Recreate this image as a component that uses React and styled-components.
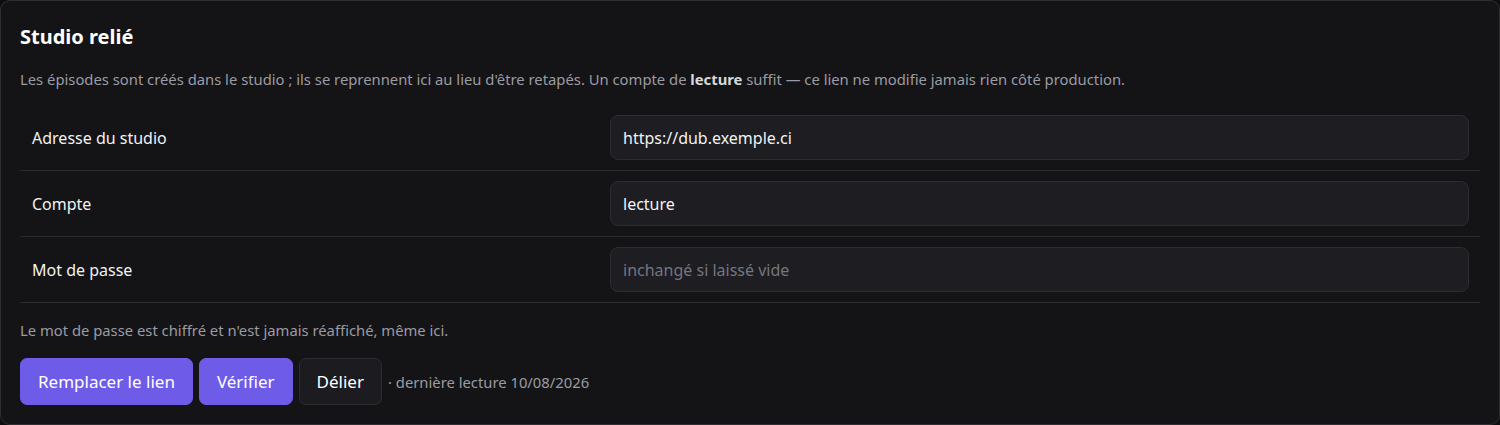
import React from 'react';
import styled, { createGlobalStyle } from 'styled-components';

const GlobalStyle = createGlobalStyle`
  html, body {
    margin: 0;
    padding: 0;
    background: #0e0e10;
  }
  body {
    font-family: "Noto Sans", "Open Sans", sans-serif;
    color: #f2f2f4;
  }
  * { box-sizing: border-box; }
`;

const Card = styled.section`
  width: 1500px;
  height: 425px;
  background: #141416;
  border: 1px solid #2e2e33;
  border-radius: 10px;
  padding: 20px 19px 19px 19px;
  display: flex;
  flex-direction: column;
`;

const Title = styled.h2`
  margin: 0;
  font-size: 20px;
  font-weight: 700;
  line-height: 32px;
  color: #ffffff;
`;

const Lead = styled.p`
  margin: 16px 0 16px;
  font-size: 14.8px;
  line-height: 20px;
  color: #9b9ba3;

  b {
    color: #d8d8dc;
    font-weight: 700;
  }
`;

const FieldRow = styled.div`
  display: grid;
  grid-template-columns: 578px 1fr;
  align-items: center;
  padding: 10px 11px 10px 12px;
  border-bottom: 1px solid #2a2a2f;
`;

const Label = styled.label`
  font-size: 16px;
  color: #f2f2f4;
`;

const Input = styled.input`
  height: 45px;
  width: 100%;
  padding: 0 12px;
  border: 1px solid #2c2c33;
  border-radius: 8px;
  background: #1d1d22;
  color: #f2f2f4;
  font-family: inherit;
  font-size: 16px;
  outline: none;

  &::placeholder {
    color: #75757d;
  }
`;

const Note = styled.p`
  margin: 17px 0 18px;
  font-size: 14.8px;
  line-height: 20px;
  color: #9b9ba3;
`;

const Actions = styled.div`
  display: flex;
  align-items: center;
  gap: 6px;
`;

const Button = styled.button`
  height: 47px;
  padding: 0 17px;
  border-radius: 7px;
  font-family: inherit;
  font-size: 17px;
  cursor: pointer;
  border: 1px solid ${(p) => (p.$primary ? '#6e5ce8' : '#2c2c33')};
  background: ${(p) => (p.$primary ? '#6e5ce8' : '#1c1c20')};
  color: #ffffff;
`;

const Meta = styled.span`
  font-size: 14.8px;
  color: #9b9ba3;
`;

const fields = [
  { id: 'url', label: 'Adresse du studio', value: 'https://dub.exemple.ci' },
  { id: 'user', label: 'Compte', value: 'lecture' },
  { id: 'pass', label: 'Mot de passe', placeholder: 'inchangé si laissé vide', type: 'password' },
];

export default function App() {
  return (
    <>
      <GlobalStyle />
      <Card>
        <Title>Studio relié</Title>
        <Lead>
          Les épisodes sont créés dans le studio ; ils se reprennent ici au lieu d'être retapés. Un compte de <b>lecture</b> suffit — ce lien ne modifie jamais rien côté production.
        </Lead>
        {fields.map((f) => (
          <FieldRow key={f.id}>
            <Label htmlFor={f.id}>{f.label}</Label>
            <Input
              id={f.id}
              type={f.type || 'text'}
              defaultValue={f.value}
              placeholder={f.placeholder}
            />
          </FieldRow>
        ))}
        <Note>Le mot de passe est chiffré et n'est jamais réaffiché, même ici.</Note>
        <Actions>
          <Button $primary>Remplacer le lien</Button>
          <Button $primary>Vérifier</Button>
          <Button>Délier</Button>
          <Meta>· dernière lecture 10/08/2026</Meta>
        </Actions>
      </Card>
    </>
  );
}
